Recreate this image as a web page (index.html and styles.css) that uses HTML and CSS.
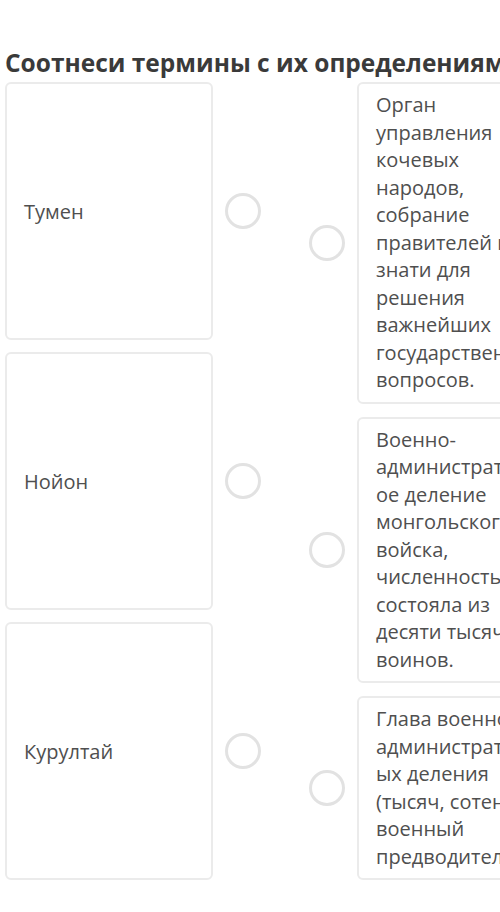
FILE: index.html
```html
<!DOCTYPE html>
<html lang="ru">
<head>
    <meta charset="UTF-8">
    <meta name="viewport" content="width=device-width, initial-scale=1.0">
    <title>Соотнеси термины</title>
    <link rel="stylesheet" href="styles.css">
</head>
<body>
    <div class="quiz">
        <h1 class="quiz-title">Соотнеси термины с их определениями</h1>
        <div class="match-board">
            <div class="terms">
                <div class="term-row">
                    <div class="term-card">Тумен</div>
                    <span class="dot"></span>
                </div>
                <div class="term-row">
                    <div class="term-card">Нойон</div>
                    <span class="dot"></span>
                </div>
                <div class="term-row">
                    <div class="term-card">Курултай</div>
                    <span class="dot"></span>
                </div>
            </div>
            <div class="definitions">
                <div class="def-row">
                    <span class="dot"></span>
                    <div class="def-card">Орган управления кочевых народов, собрание правителей и знати для решения важнейших государственных вопросов.</div>
                </div>
                <div class="def-row">
                    <span class="dot"></span>
                    <div class="def-card">Военно-административное деление монгольского войска, численность состояла из десяти тысяч воинов.</div>
                </div>
                <div class="def-row">
                    <span class="dot"></span>
                    <div class="def-card">Глава военно-административных деления (тысяч, сотен), военный предводитель.</div>
                </div>
            </div>
        </div>
    </div>
</body>
</html>
```

FILE: styles.css
```css
body {
    margin: 0;
    background: #fff;
    font-family: 'Open Sans', sans-serif;
    color: #4f4f4f;
    overflow: hidden;
}
.quiz {
    padding: 47px 0 0 5px;
    width: 640px;
}
.quiz-title {
    margin: 0 0 3px;
    font-size: 24.5px;
    line-height: 32px;
    font-weight: 700;
    color: #3a3a3a;
    white-space: nowrap;
}
.match-board {
    display: flex;
    align-items: stretch;
}
.terms {
    display: flex;
    flex-direction: column;
    gap: 12px;
}
.term-row {
    flex: 1;
    display: flex;
    align-items: center;
}
.term-card {
    align-self: stretch;
    width: 208px;
    box-sizing: border-box;
    display: flex;
    align-items: center;
    padding: 0 17px;
    border: 2px solid #ebebeb;
    border-radius: 6px;
    font-size: 20px;
}
.definitions {
    display: flex;
    flex-direction: column;
    gap: 13px;
    margin-left: 48px;
}
.def-row {
    display: flex;
    align-items: center;
}
.def-card {
    width: 208px;
    box-sizing: border-box;
    padding: 7px 17px 8px;
    border: 2px solid #ebebeb;
    border-radius: 6px;
    font-size: 20px;
    line-height: 27.5px;
    overflow-wrap: break-word;
}
.dot {
    width: 36px;
    height: 36px;
    box-sizing: border-box;
    border: 3px solid #e2e2e2;
    border-radius: 50%;
    flex-shrink: 0;
}
.term-row .dot {
    margin-left: 12px;
}
.def-row .dot {
    margin-right: 12px;
}
```
